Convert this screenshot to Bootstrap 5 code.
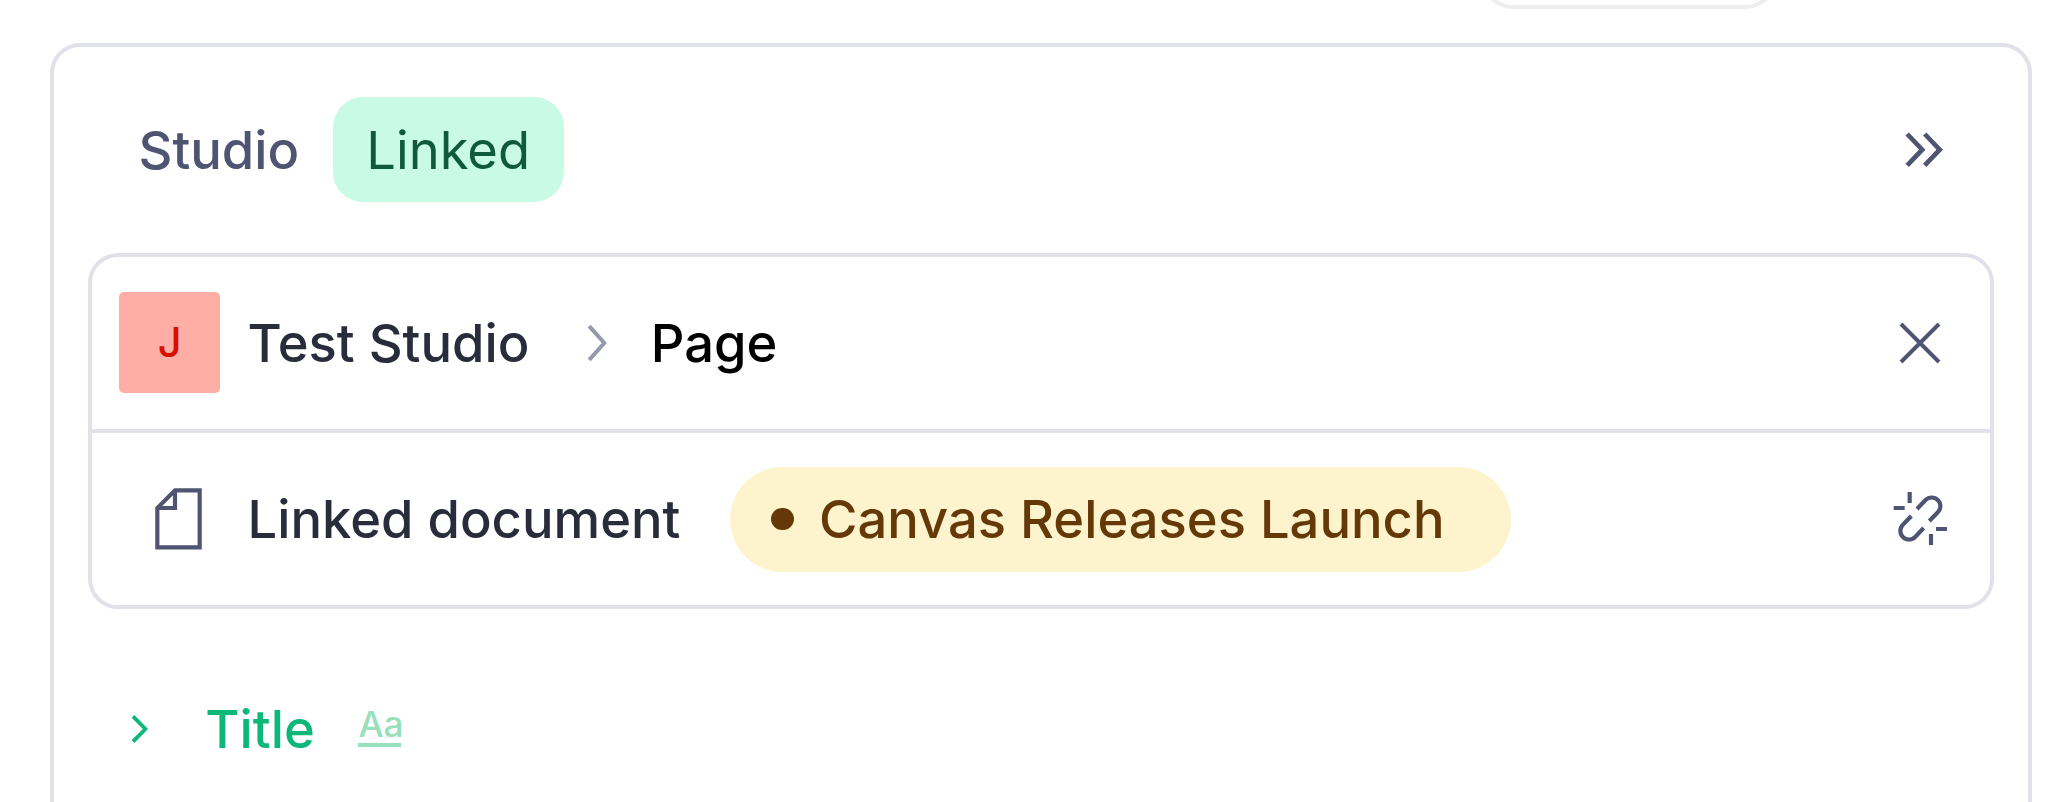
<!DOCTYPE html>
<html lang="en">
<head>
<meta charset="utf-8">
<meta name="viewport" content="width=device-width, initial-scale=1">
<title>Studio</title>
<link href="https://cdn.jsdelivr.net/npm/bootstrap@5.3.0/dist/css/bootstrap.min.css" rel="stylesheet">
<style>
  :root { --line: #e1e1e9; --ink: #4e5471; --ink-strong: #292d3b; }
  body { font-family: Inter, "Liberation Sans", sans-serif; font-size: 52.5px; line-height: 63px; background: #fff; }
  svg { fill: none; stroke: var(--ink); display: block; flex: none; }
  .label-text { font-weight: 500; }
  .nudge { padding-top: 2px; }
  .top-strip { height: 43px; padding-right: 268px; }
  .top-tab { width: 302px; height: 9px; }
  .top-tab::before { content: ""; display: block; height: 80px; margin-top: -71px; border: 4px solid #eeeef1; border-radius: 36px; }
  .panel { margin: 0 16px 0 50px; border: 4px solid var(--line); border-bottom: 0; border-radius: 30px 30px 0 0; }
  .panel-head { padding: 50px 82px 51px 84.5px; gap: 34px; color: var(--ink); }
  .status { width: 231px; height: 105px; padding-left: 33px; border-radius: 30px; background: #c8fae5; color: #0f5a3d; }
  .linked-box { margin: 0 34px; border: 4px solid var(--line); border-radius: 30px; color: var(--ink-strong); }
  .line-one { height: 172px; padding: 0 47.6px 1px 27.3px; }
  .line-two { height: 176px; padding: 0 41.7px 0 62px; border-top: 4px solid var(--line); }
  .avatar { width: 100.6px; height: 101px; border-radius: 5px; background: #ffaea6; color: #d60f00; font-size: 41.5px; margin-right: 27.6px; }
  .crumb { margin: 0 41.7px 0 55.6px; stroke: #949aab; }
  .doc-pill { width: 781px; height: 105px; margin-left: 49.6px; padding-left: 41px; background: #fdf4cd; color: #653808; }
  .dot { width: 22.5px; height: 22.5px; margin-right: 25.5px; background: #653808; }
  .doc-icon { margin-right: 44.5px; }
  .field { margin-top: 87px; padding-left: 75px; color: #0bb877; }
  .field svg { stroke: #0bb877; margin-right: 55.3px; }
  .type-mark { margin: 0 0 4px 43.6px; width: 43px; font-size: 35.5px; line-height: 36px; color: #98dfbc; border-bottom: 4px solid #98dfbc; }
</style>
</head>
<body class="vh-100 overflow-hidden d-flex flex-column">
  <div class="top-strip d-flex justify-content-end align-items-start">
    <div class="top-tab overflow-hidden"></div>
  </div>

  <main class="panel flex-grow-1">
    <header class="panel-head d-flex align-items-center">
      <span class="label-text nudge">Studio</span>
      <span class="status nudge d-flex align-items-center">Linked</span>
      <svg class="ms-auto" width="44" height="44" viewBox="0 0 44 44" stroke-width="4.7"><path d="M5.2 6 20.2 21.7 5.2 37.4M22.7 6 37.7 21.7 22.7 37.4"/></svg>
    </header>

    <section class="linked-box">
      <div class="line-one d-flex align-items-center">
        <span class="avatar label-text d-flex align-items-center justify-content-center">J</span>
        <span class="label-text nudge">Test Studio</span>
        <svg class="crumb" width="24" height="44" viewBox="0 0 24 44" stroke-width="4"><path d="M4.2 5.2 19.3 22 4.2 38.8"/></svg>
        <span class="label-text nudge text-black">Page</span>
        <svg class="ms-auto" width="44" height="44" viewBox="0 0 44 44" stroke-width="3.9"><path d="M3 3 41 41M41 3 3 41"/></svg>
      </div>
      <div class="line-two d-flex align-items-center">
        <svg class="doc-icon" width="49" height="64" viewBox="40 36 147 192" stroke-width="12.5"><path d="M103 46H177V217H50V99ZM103 46V99H50"/></svg>
        <span class="label-text">Linked document</span>
        <span class="doc-pill rounded-pill d-flex align-items-center">
          <span class="dot rounded-circle"></span><span class="label-text">Canvas Releases Launch</span>
        </span>
        <svg class="ms-auto" width="55" height="56" viewBox="40 34 165 168" stroke-width="12.5"><path d="M90 37V70M42 85H75M154 163V196M169 148H202M112 88 137.6 61A26 26 0 0 1 174.4 97.8L149 124M132 145 106.4 172A26 26 0 0 1 69.6 135.2L95 109"/></svg>
      </div>
    </section>

    <div class="field d-flex align-items-center">
      <svg width="21" height="36" viewBox="0 0 21 36" stroke-width="3.8"><path d="M4 5.4 16.4 18 4 30.6"/></svg>
      <span class="label-text nudge">Title</span>
      <span class="type-mark label-text">Aa</span>
    </div>
  </main>
<script src="https://cdn.jsdelivr.net/npm/bootstrap@5.3.0/dist/js/bootstrap.bundle.min.js"></script>
</body>
</html>
